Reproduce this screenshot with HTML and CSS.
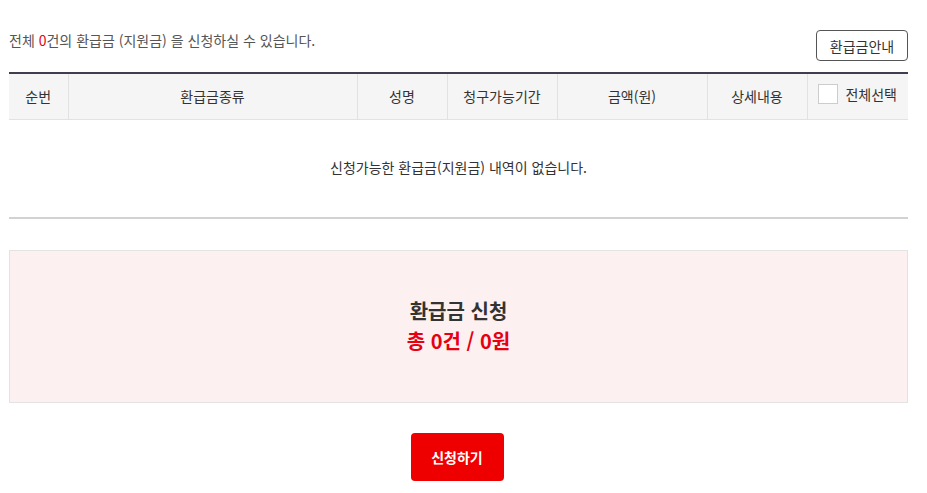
FILE: index.html
```html
<!DOCTYPE html>
<html lang="ko">
<head>
<meta charset="utf-8">
<link rel="stylesheet" href="styles.css">
</head>
<body>
<div class="wrap">
  <div class="topbar">
    <p class="summary">전체 <span class="red">0</span>건의 환급금 (지원금) 을 신청하실 수 있습니다.</p>
    <button class="guide">환급금안내</button>
  </div>
  <table class="list">
    <colgroup>
      <col style="width:59px"><col style="width:289px"><col style="width:90px"><col style="width:110px"><col style="width:150px"><col style="width:100px"><col>
    </colgroup>
    <thead>
      <tr>
        <th>순번</th><th>환급금종류</th><th>성명</th><th>청구가능기간</th><th>금액(원)</th><th>상세내용</th>
        <th><span class="chkwrap"><span class="chk"></span>전체선택</span></th>
      </tr>
    </thead>
    <tbody>
      <tr><td colspan="7" class="empty">신청가능한 환급금(지원금) 내역이 없습니다.</td></tr>
    </tbody>
  </table>
  <div class="totalbox">
    <div class="tt">환급금 신청</div>
    <div class="tv">총 0건 / 0원</div>
  </div>
  <div class="actions"><button class="apply">신청하기</button></div>
</div>
</body>
</html>
```
FILE: styles.css
```css
* { box-sizing: border-box; }
body { margin: 0; font-family: "Noto Sans CJK KR", "Noto Sans", sans-serif; color: #333; background: #fff; }
.wrap { width: 899px; margin-left: 9px; }
.topbar { display: flex; justify-content: space-between; align-items: flex-start; padding-top: 30px; height: 72px; }
.summary { margin: 0; font-size: 14px; color: #555; line-height: 20px; margin-top: 0; }
.red { color: #e60012; }
.guide { height: 31px; width: 92px; border: 1px solid #555; border-radius: 4px; background: #fff; font-family: inherit; font-size: 14px; color: #333; padding: 0; }
.list { width: 100%; border-collapse: collapse; table-layout: fixed; border-top: 2px solid #3f3e4e; }
.list th { height: 46px; background: #f5f5f5; font-weight: normal; font-size: 14px; color: #333; border-left: 1px solid #e2e2e2; border-bottom: 1px solid #e2e2e2; padding: 0; }
.list th:first-child { border-left: none; }
.chkwrap { display: inline-flex; align-items: center; gap: 7px; }
.chk { width: 20px; height: 20px; border: 1px solid #ccc; background: #fff; display: inline-block; }
.empty { height: 99px; text-align: center; font-size: 14px; color: #333; border-bottom: 2px solid #d2d2d2; padding: 0 0 3px; }
.totalbox { margin-top: 31px; height: 153px; border: 1px solid #e3e3e3; background: #fdf0f0; display: flex; flex-direction: column; align-items: center; justify-content: center; padding-bottom: 2px; }
.tt { font-size: 20px; font-weight: bold; color: #333; line-height: 30px; }
.tv { font-size: 20px; font-weight: bold; color: #e60012; line-height: 30px; }
.actions { display: flex; justify-content: center; padding-top: 30px; }
.apply { width: 93px; height: 48px; background: #ee0000; color: #fff; border: none; border-radius: 4px; font-family: inherit; font-size: 14px; font-weight: bold; margin-right: 3px; }
```
